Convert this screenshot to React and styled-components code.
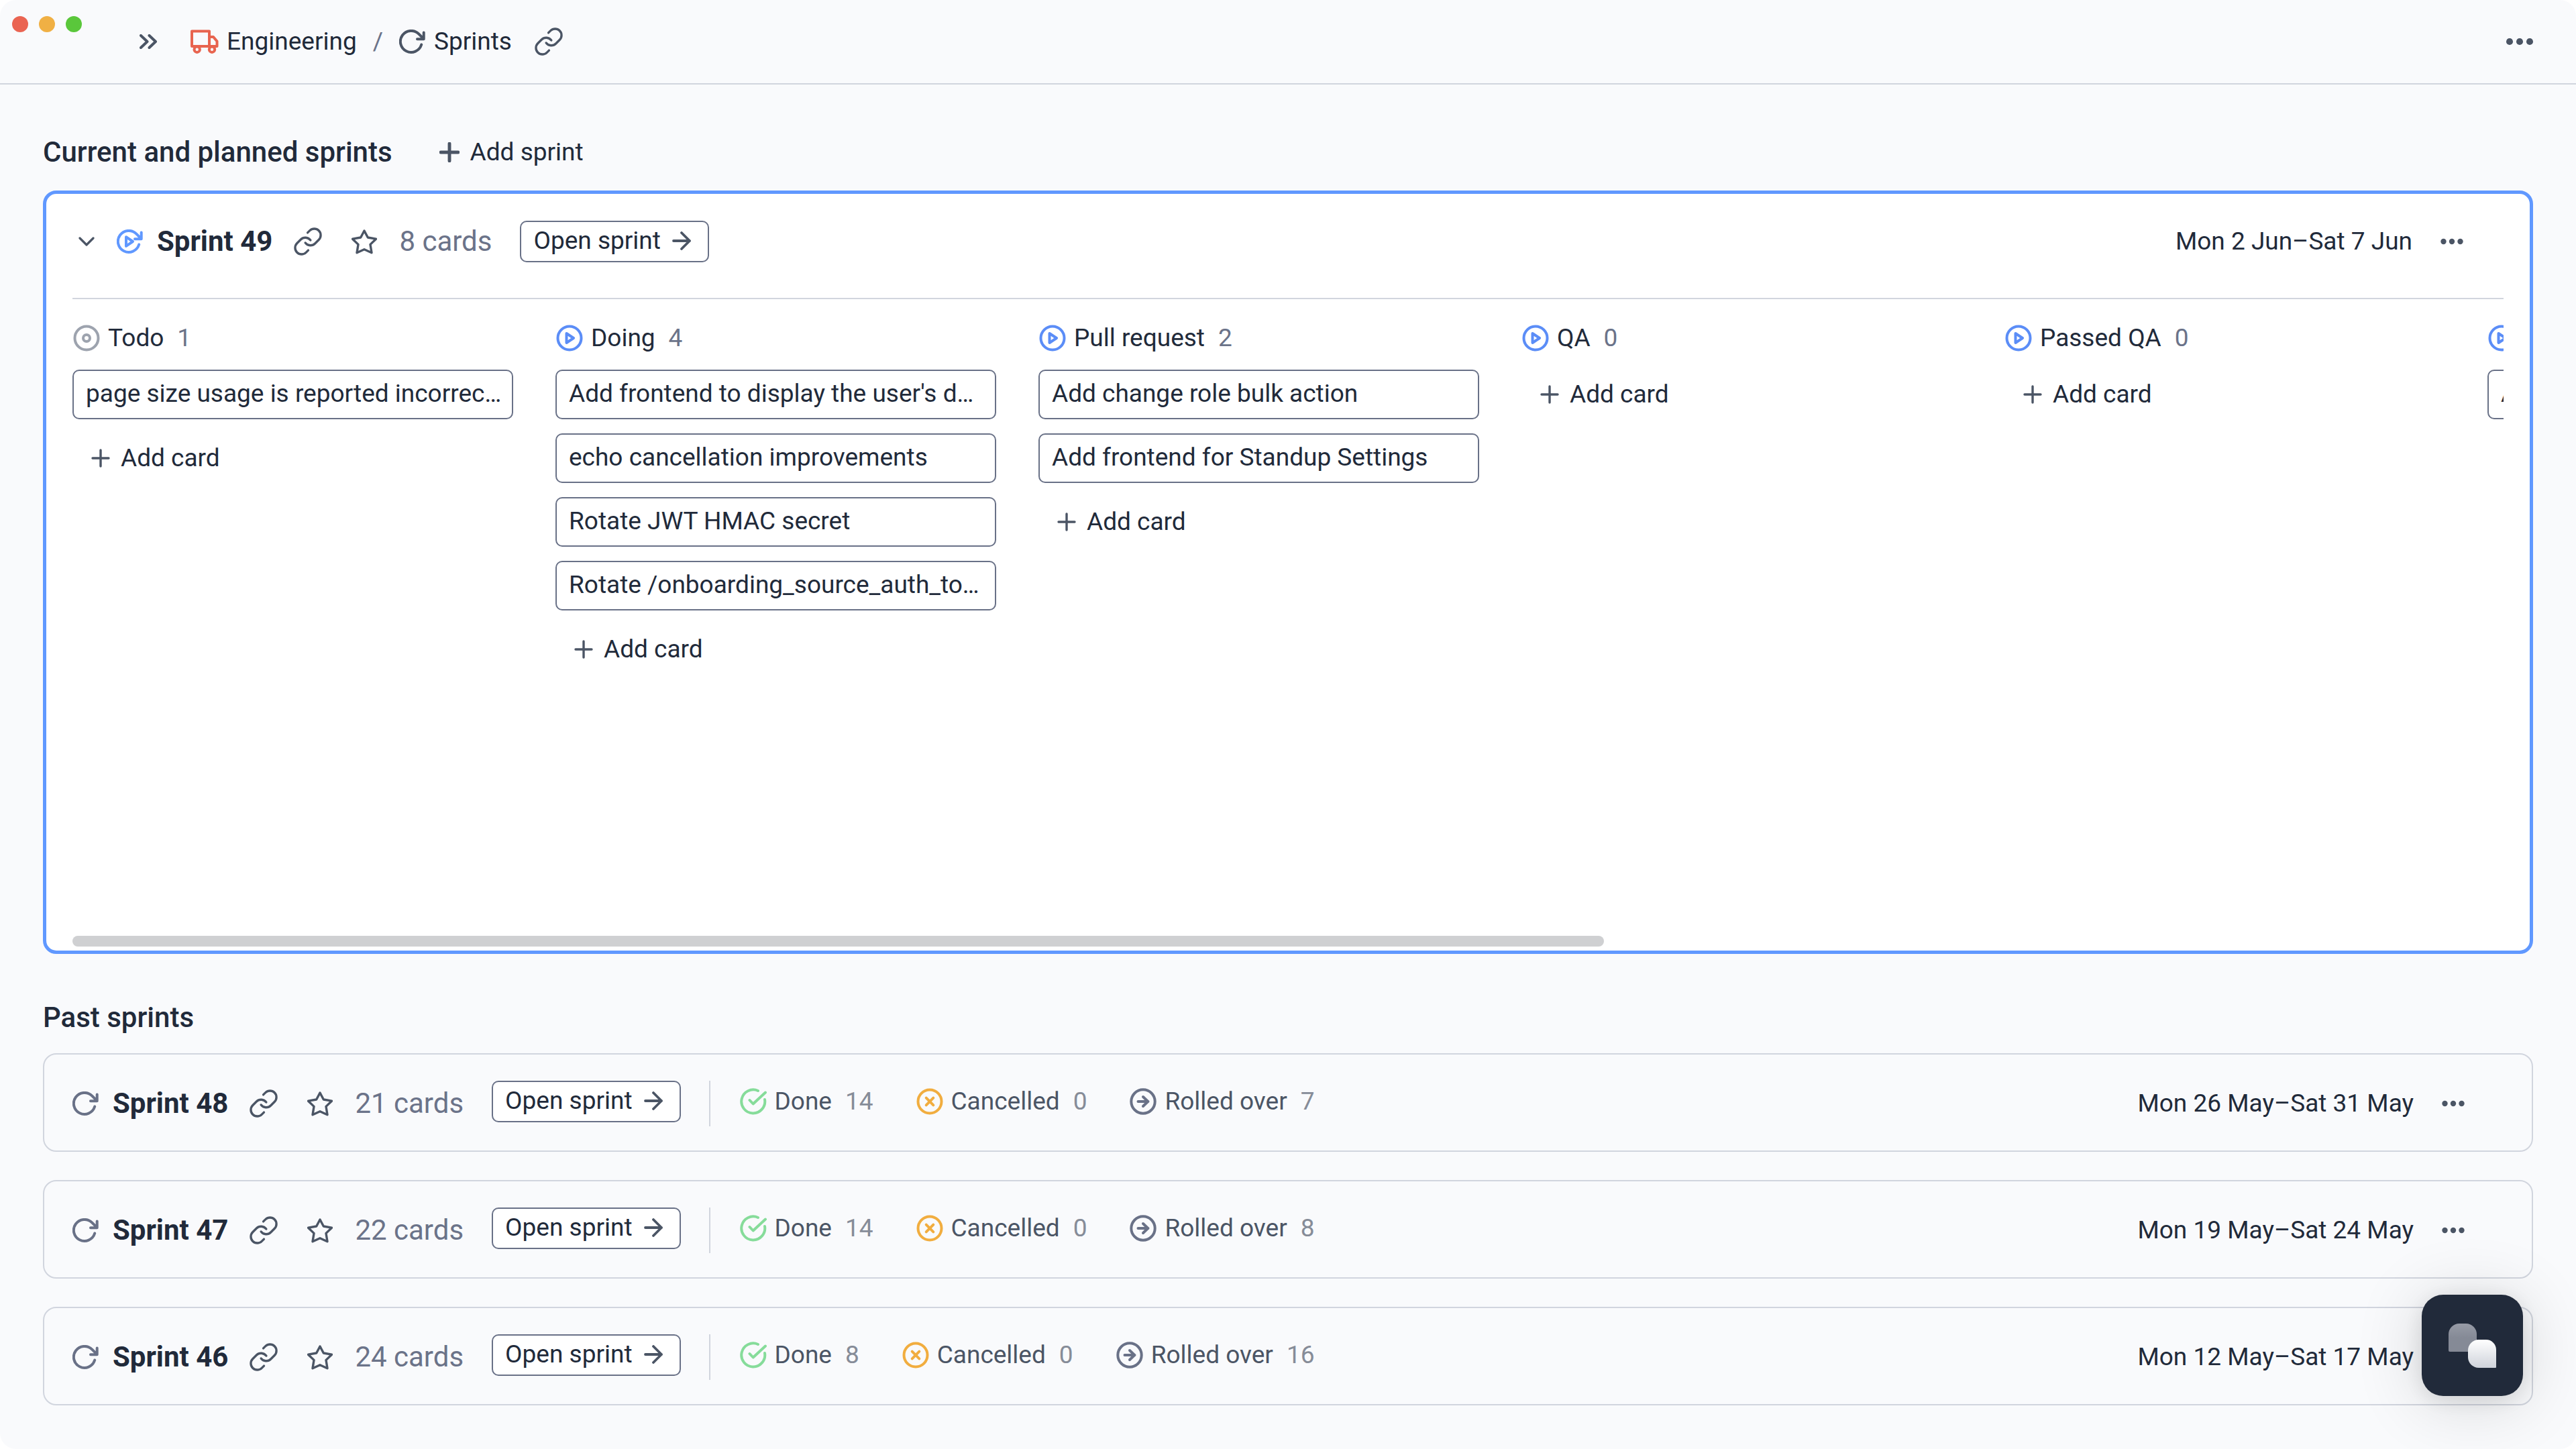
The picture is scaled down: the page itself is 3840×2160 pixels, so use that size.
import React from "react";
import styled, { createGlobalStyle, ThemeProvider } from "styled-components";
import { Link as LinkIcon } from "lucide-react";

const theme = {
  colors: {
    page: "#f9fafc",
    white: "#ffffff",
    text: "#212a3a",
    slate: "#4b5565",
    muted: "#6b7389",
    faded: "#868c98",
    border: "#d1d5de",
    outline: "#697187",
    active: "#6098ff",
    play: "#5b8df7",
    todo: "#9da3ae",
    done: "#86dc9a",
    cancelled: "#f1ad3f",
    team: "#e8644f",
  },
  fontSizes: { body: "37px", large: "42px" },
};

const GlobalStyle = createGlobalStyle`
  *, *::before, *::after {
    box-sizing: border-box;
  }
  body {
    margin: 0;
    background: #ffffff;
  }
  svg {
    display: block;
    flex: none;
  }
  button {
    border: 0;
    padding: 0;
    background: none;
    color: inherit;
    font: inherit;
    cursor: pointer;
  }
  h1, h2, h3, p, ul {
    margin: 0;
    padding: 0;
  }
`;

/* Icons */

const Svg = styled.svg`
  fill: none;
  stroke: currentColor;
  stroke-linecap: round;
  stroke-linejoin: round;
`;

const Icon = ({ w, h, stroke = 4, children }) => (
  <Svg
    width={w}
    height={h}
    viewBox={`0 0 ${w} ${h}`}
    strokeWidth={stroke}
    aria-hidden="true"
  >
    {children}
  </Svg>
);

const ChevronsIcon = () => (
  <Icon w={26} h={22}>
    <path d="M2 2l9.5 9-9.5 9M14.5 2l9.5 9-9.5 9" />
  </Icon>
);

const ChevronDownIcon = () => (
  <Icon w={24} h={14} stroke={3.2}>
    <path d="M2 2l10 10L22 2" />
  </Icon>
);

const TruckIcon = () => (
  <Icon w={42} h={36}>
    <path d="M28 25V2.5H2V25h37.5v-7.5L34 11h-6" />
    <circle cx="9.7" cy="29.7" r="4.2" />
    <circle cx="32" cy="29.7" r="4.2" />
  </Icon>
);

const CycleIcon = ({ playing }) => (
  <Icon w={40} h={36}>
    <path d="M33.2 22.5A16 16 0 1 1 29.3 6.7l7 7M36.7 4.5v9.8H27" />
    {playing && <path d="M14 11.2L24 18l-10 6.8z" />}
  </Icon>
);

const StarIcon = () => (
  <Icon w={38} h={37} stroke={3.4}>
    <path d="M19 2l5.3 10 12.2 2.2-8.5 8.2 2 12.3-11-5-11 5 2-12.3-8.5-8.2L13.7 12z" />
  </Icon>
);

const PlusIcon = ({ size = 28, stroke = 3.4 }) => (
  <Svg
    width={size}
    height={size}
    viewBox="0 0 28 28"
    strokeWidth={stroke}
    aria-hidden="true"
  >
    <path d="M14 2v24M2 14h24" />
  </Svg>
);

const ArrowIcon = () => (
  <Icon w={28} h={28} stroke={3.8}>
    <path d="M2 14h24M14 2l12 12-12 12" />
  </Icon>
);

const MoreIcon = ({ big }) => (
  <Svg
    width={big ? 42 : 34}
    height={big ? 12 : 10}
    viewBox="0 0 34 10"
    aria-hidden="true"
  >
    <g fill="currentColor" stroke="none">
      <circle cx="4.5" cy="5" r="4.2" />
      <circle cx="17" cy="5" r="4.2" />
      <circle cx="29.5" cy="5" r="4.2" />
    </g>
  </Svg>
);

const TodoIcon = () => (
  <Icon w={40} h={40}>
    <circle cx="20" cy="20" r="17.5" />
    <circle cx="20" cy="20" r="5" />
  </Icon>
);

const PlayIcon = () => (
  <Icon w={40} h={40}>
    <circle cx="20" cy="20" r="17.5" />
    <path d="M15.5 13L26 20l-10.5 7z" />
  </Icon>
);

const DoneIcon = () => (
  <Icon w={40} h={40}>
    <path d="M37 17A17.5 17.5 0 1 1 27 4" />
    <path d="M14.5 18l5.2 5.5L38 6.5" />
  </Icon>
);

const CancelledIcon = () => (
  <Icon w={40} h={40}>
    <circle cx="20" cy="20" r="17.5" />
    <path d="M14.7 14.7l10.6 10.6M25.3 14.7L14.7 25.3" />
  </Icon>
);

const RolledIcon = () => (
  <Icon w={40} h={40}>
    <circle cx="20" cy="20" r="17.7" />
    <path d="M12.5 20h15M20 13l7.2 7-7.2 7" />
  </Icon>
);

const ChatIcon = () => (
  <svg width="72" height="66" viewBox="0 0 72 66" aria-hidden="true">
    <defs>
      <linearGradient id="chat-back" x1="0" y1="0" x2="0" y2="1">
        <stop offset="0" stopColor="#979ba6" />
        <stop offset="0.5" stopColor="#858a96" />
      </linearGradient>
      <linearGradient id="chat-front" x1="0" y1="0" x2="0" y2="1">
        <stop offset="0" stopColor="#ffffff" />
        <stop offset="1" stopColor="#cfd3db" />
      </linearGradient>
    </defs>
    <path
      fill="url(#chat-back)"
      d="M16 0h10a16 16 0 0 1 16 16v26H2a2 2 0 0 1-2-2V16A16 16 0 0 1 16 0z"
    />
    <path
      fill="url(#chat-front)"
      d="M45 24h11a15 15 0 0 1 15 15v26a1 1 0 0 1-1 1H45a16 16 0 0 1-16-16V40a16 16 0 0 1 16-16z"
    />
  </svg>
);

/* Window and top bar */

const Window = styled.div`
  min-height: 100vh;
  border-radius: 24px;
  background: ${({ theme }) => theme.colors.page};
  color: ${({ theme }) => theme.colors.text};
  font-family: Roboto, "Liberation Sans", sans-serif;
  font-size: ${({ theme }) => theme.fontSizes.body};
  line-height: 44px;
`;

const TopBar = styled.header`
  display: flex;
  align-items: center;
  height: 126px;
  padding: 0 63px 0 18px;
  border-bottom: 2px solid ${({ theme }) => theme.colors.border};
`;

const Lights = styled.div`
  display: flex;
  align-self: flex-start;
  gap: 16px;
  padding-top: 24px;
  margin-right: 86px;
`;

const Light = styled.span`
  width: 24px;
  height: 24px;
  border-radius: 50%;
  background: ${({ tone }) => tone};
`;

const IconButton = styled.button`
  display: flex;
  align-items: center;
  color: ${({ theme }) => theme.colors.slate};
`;

const Breadcrumbs = styled.nav`
  display: flex;
  align-items: center;
  gap: 24px;
  margin: 0 32px 0 50px;
  color: ${({ theme }) => theme.colors.muted};
`;

const Crumb = styled.a`
  display: flex;
  align-items: center;
  gap: 12px;
  color: ${({ theme }) => theme.colors.text};
  text-decoration: none;
  svg {
    color: ${({ theme, tone }) => theme.colors[tone]};
  }
`;

const TopBarEnd = styled.div`
  margin-left: auto;
`;

/* Sections */

const Main = styled.main`
  padding: 76px 64px 64px;
`;

const SectionHead = styled.div`
  display: flex;
  align-items: center;
  gap: 70px;
  height: 50px;
  margin-bottom: ${({ $gap }) => $gap}px;
`;

const SectionTitle = styled.h2`
  font-size: ${({ theme }) => theme.fontSizes.large};
  font-weight: 500;
  line-height: 50px;
`;

const AddButton = styled.button`
  display: flex;
  align-items: center;
  gap: 16px;
  svg {
    color: ${({ theme }) => theme.colors.slate};
  }
`;

const CurrentSprint = styled.section`
  display: flex;
  flex-direction: column;
  min-height: 1138px;
  margin-bottom: 70px;
  padding: 40px 39px 6px;
  border: 5px solid ${({ theme }) => theme.colors.active};
  border-radius: 20px;
  background: ${({ theme }) => theme.colors.white};
`;

const SprintRow = styled.div`
  display: flex;
  align-items: center;
`;

const CurrentHead = styled(SprintRow)`
  padding: 0 60px 53px 9px;
  border-bottom: 2px solid ${({ theme }) => theme.colors.border};
`;

const PastSprint = styled(SprintRow)`
  margin-bottom: 42px;
  padding: 39px 100px 36px 42px;
  border: 2px solid ${({ theme }) => theme.colors.border};
  border-radius: 20px;
  &:last-child {
    margin-bottom: 0;
  }
`;

const SprintIcon = styled.span`
  margin: 0 20px 0 ${({ $current }) => ($current ? 33 : 0)}px;
  color: ${({ theme, $current }) =>
    $current ? theme.colors.active : theme.colors.outline};
`;

const SprintName = styled.h3`
  font-size: ${({ theme }) => theme.fontSizes.large};
  font-weight: 700;
  line-height: 50px;
`;

const SprintTools = styled.div`
  display: flex;
  align-items: center;
  gap: 42px;
  margin: 0 33px 0 30px;
`;

const CardCount = styled.span`
  margin-right: 42px;
  color: ${({ theme }) => theme.colors.muted};
  font-size: ${({ theme }) => theme.fontSizes.large};
`;

const Summary = styled.div`
  display: flex;
  align-items: flex-start;
`;

const OpenButton = styled.button`
  display: flex;
  align-items: center;
  gap: 17px;
  height: 62px;
  padding: 0 25px 2px 18px;
  border: 2px solid ${({ theme }) => theme.colors.outline};
  border-radius: 10px;
  background: ${({ theme }) => theme.colors.white};
  svg {
    color: ${({ theme }) => theme.colors.slate};
  }
`;

const Divider = styled.span`
  width: 2px;
  height: 68px;
  margin: 0 44px 0 42px;
  background: ${({ theme }) => theme.colors.border};
`;

const Stats = styled.ul`
  display: flex;
  gap: 64px;
  list-style: none;
`;

const Stat = styled.li`
  display: flex;
  align-items: center;
  height: 62px;
  color: ${({ theme }) => theme.colors.slate};
  svg {
    margin-right: 12px;
    color: ${({ theme, tone }) => theme.colors[tone]};
  }
`;

const StatCount = styled.span`
  margin-left: 20px;
  color: ${({ theme }) => theme.colors.faded};
`;

const Dates = styled.p`
  margin: 0 42px 0 auto;
`;

/* Board */

const Board = styled.div`
  flex: 1;
  overflow: hidden;
  padding-top: 36px;
`;

const Columns = styled.div`
  display: grid;
  grid-template-columns: repeat(8, 657px);
  gap: 63px;
`;

const ColumnHead = styled.div`
  display: flex;
  align-items: center;
  height: 44px;
  margin-bottom: 25px;
  white-space: nowrap;
  svg {
    margin: 0 12px 0 1px;
    color: ${({ theme, tone }) => theme.colors[tone]};
  }
`;

const ColumnCount = styled.span`
  margin-left: 20px;
  color: ${({ theme }) => theme.colors.muted};
`;

const CardList = styled.div`
  display: flex;
  flex-direction: column;
  gap: 21px;
`;

const Card = styled.button`
  overflow: hidden;
  height: 74px;
  padding: 0 14px 2px 18px;
  border: 2px solid ${({ theme }) => theme.colors.outline};
  border-radius: 10px;
  background: ${({ theme }) => theme.colors.white};
  text-align: left;
  text-overflow: ellipsis;
  white-space: nowrap;
`;

const AddCard = styled(AddButton)`
  align-self: flex-start;
  height: 74px;
  padding-left: 28px;
`;

const ScrollTrack = styled.div`
  height: 16px;
`;

const ScrollThumb = styled.div`
  width: 63%;
  height: 16px;
  border-radius: 8px;
  background: #cfd0d2;
`;

const ChatButton = styled.button`
  position: fixed;
  right: 79px;
  bottom: 79px;
  display: flex;
  align-items: center;
  justify-content: center;
  width: 151px;
  height: 151px;
  border-radius: 32px;
  background: ${({ theme }) => theme.colors.text};
  box-shadow: 0 8px 100px rgba(0, 0, 0, 0.16), 0 6px 32px rgba(0, 0, 0, 0.1);
`;

const columns = [
  {
    name: "Todo",
    count: 1,
    tone: "todo",
    cards: ["page size usage is reported incorrectly"],
  },
  {
    name: "Doing",
    count: 4,
    tone: "play",
    cards: [
      "Add frontend to display the user's devices",
      "echo cancellation improvements",
      "Rotate JWT HMAC secret",
      "Rotate /onboarding_source_auth_token",
    ],
  },
  {
    name: "Pull request",
    count: 2,
    tone: "play",
    cards: ["Add change role bulk action", "Add frontend for Standup Settings"],
  },
  { name: "QA", count: 0, tone: "play", cards: [] },
  { name: "Passed QA", count: 0, tone: "play", cards: [] },
  { tone: "play", cards: ["A"], overflow: true },
];

const pastSprints = [
  { number: 48, cards: 21, done: 14, cancelled: 0, rolled: 7, dates: "Mon 26 May–Sat 31 May" },
  { number: 47, cards: 22, done: 14, cancelled: 0, rolled: 8, dates: "Mon 19 May–Sat 24 May" },
  { number: 46, cards: 24, done: 8, cancelled: 0, rolled: 16, dates: "Mon 12 May–Sat 17 May" },
];

const CopyLink = () => (
  <IconButton aria-label="Copy link">
    <LinkIcon size={46} strokeWidth={1.75} />
  </IconButton>
);

const MoreButton = ({ big }) => (
  <IconButton aria-label="More options">
    <MoreIcon big={big} />
  </IconButton>
);

const SprintInfo = ({ number, cards, current }) => (
  <>
    <SprintIcon $current={current}>
      <CycleIcon playing={current} />
    </SprintIcon>
    <SprintName>Sprint {number}</SprintName>
    <SprintTools>
      <CopyLink />
      <IconButton aria-label="Add to favourites">
        <StarIcon />
      </IconButton>
    </SprintTools>
    <CardCount>{cards} cards</CardCount>
  </>
);

const OpenSprint = () => (
  <OpenButton>
    Open sprint
    <ArrowIcon />
  </OpenButton>
);

const BoardColumn = ({ name, count, tone, cards, overflow }) => (
  <div>
    <ColumnHead tone={tone}>
      {tone === "todo" ? <TodoIcon /> : <PlayIcon />}
      {name}
      {!overflow && <ColumnCount>{count}</ColumnCount>}
    </ColumnHead>
    <CardList>
      {cards.map((card) => (
        <Card key={card}>{card}</Card>
      ))}
      {!overflow && (
        <AddCard>
          <PlusIcon />
          Add card
        </AddCard>
      )}
    </CardList>
  </div>
);

const App = () => (
  <ThemeProvider theme={theme}>
    <GlobalStyle />
    <Window>
      <TopBar>
        <Lights>
          <Light tone="#ea6452" />
          <Light tone="#f0b044" />
          <Light tone="#5ac73b" />
        </Lights>
        <IconButton aria-label="Expand sidebar">
          <ChevronsIcon />
        </IconButton>
        <Breadcrumbs>
          <Crumb href="#engineering" tone="team">
            <TruckIcon />
            Engineering
          </Crumb>
          <span>/</span>
          <Crumb href="#sprints" tone="slate">
            <CycleIcon />
            Sprints
          </Crumb>
        </Breadcrumbs>
        <CopyLink />
        <TopBarEnd>
          <MoreButton big />
        </TopBarEnd>
      </TopBar>
      <Main>
        <SectionHead $gap={32}>
          <SectionTitle>Current and planned sprints</SectionTitle>
          <AddButton>
            <PlusIcon size={30} stroke={4.6} />
            Add sprint
          </AddButton>
        </SectionHead>
        <CurrentSprint>
          <CurrentHead>
            <IconButton aria-label="Collapse sprint">
              <ChevronDownIcon />
            </IconButton>
            <SprintInfo number={49} cards={8} current />
            <Summary>
              <OpenSprint />
            </Summary>
            <Dates>Mon 2 Jun–Sat 7 Jun</Dates>
            <MoreButton />
          </CurrentHead>
          <Board>
            <Columns>
              {columns.map((column, index) => (
                <BoardColumn key={`column-${index}`} {...column} />
              ))}
            </Columns>
          </Board>
          <ScrollTrack>
            <ScrollThumb />
          </ScrollTrack>
        </CurrentSprint>
        <SectionHead $gap={28}>
          <SectionTitle>Past sprints</SectionTitle>
        </SectionHead>
        <section>
          {pastSprints.map((sprint) => (
            <PastSprint key={sprint.number}>
              <SprintInfo number={sprint.number} cards={sprint.cards} />
              <Summary>
                <OpenSprint />
                <Divider />
                <Stats>
                  <Stat tone="done">
                    <DoneIcon />
                    Done
                    <StatCount>{sprint.done}</StatCount>
                  </Stat>
                  <Stat tone="cancelled">
                    <CancelledIcon />
                    Cancelled
                    <StatCount>{sprint.cancelled}</StatCount>
                  </Stat>
                  <Stat tone="outline">
                    <RolledIcon />
                    Rolled over
                    <StatCount>{sprint.rolled}</StatCount>
                  </Stat>
                </Stats>
              </Summary>
              <Dates>{sprint.dates}</Dates>
              <MoreButton />
            </PastSprint>
          ))}
        </section>
      </Main>
      <ChatButton aria-label="Open chat">
        <ChatIcon />
      </ChatButton>
    </Window>
  </ThemeProvider>
);

export default App;
